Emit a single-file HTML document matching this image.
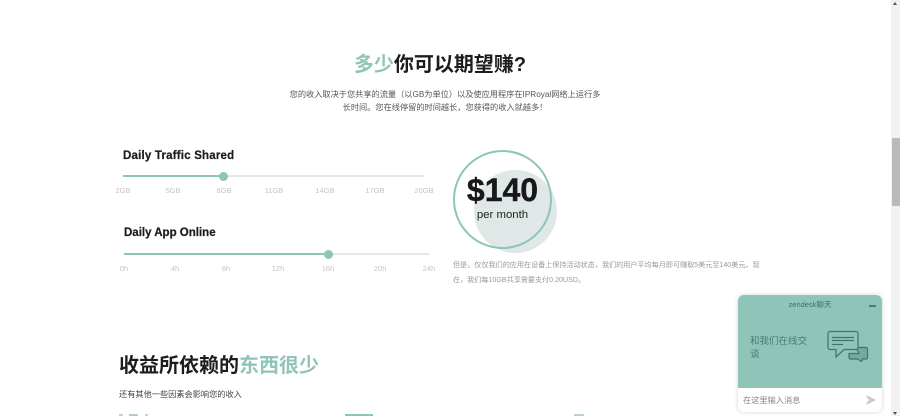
<!DOCTYPE html>
<html lang="zh">
<head>
<meta charset="utf-8">
<style>
html,body{margin:0;padding:0;width:900px;height:416px;overflow:hidden;background:#fff}
body{position:relative;font-family:"Liberation Sans","Noto Sans CJK SC",sans-serif;color:#1d1d1f}
.a{position:absolute;white-space:nowrap}
.g{color:#8fc4b9}
.c{text-align:center}
.lab{position:absolute;font-size:7.5px;line-height:10px;color:#c4c4c4;width:30px;text-align:center}
.track{position:absolute;height:2px;background:#dfe9e6}
.fill{position:absolute;height:2px;background:#8fc4b9}
.thumb{position:absolute;width:9px;height:9px;border-radius:50%;background:#8fc4b9}
.h{font-weight:700;-webkit-text-stroke:.25px #1d1d1f}
</style>
</head>
<body>
<div class="a c" style="left:0;width:880px;top:49px;font-size:20px;line-height:32px;font-weight:700"><span class="g">多少</span>你可以期望赚?</div>
<div class="a c" style="left:0;width:890px;top:88px;font-size:8.2px;line-height:13px;color:#555">您的收入取决于您共享的流量（以GB为单位）以及使应用程序在IPRoyal网络上运行多<br>长时间。您在线停留的时间越长，您获得的收入就越多！</div>

<div class="a h" style="left:123px;top:149px;font-size:11.5px;line-height:14px;letter-spacing:.2px">Daily Traffic Shared</div>
<div class="track" style="left:123px;top:175px;width:301px"></div>
<div class="fill" style="left:123px;top:175px;width:100px"></div>
<div class="thumb" style="left:219px;top:172px"></div>
<div class="lab" style="left:108px;top:186px">2GB</div>
<div class="lab" style="left:158px;top:186px">5GB</div>
<div class="lab" style="left:209px;top:186px">8GB</div>
<div class="lab" style="left:259px;top:186px">11GB</div>
<div class="lab" style="left:310px;top:186px">14GB</div>
<div class="lab" style="left:360px;top:186px">17GB</div>
<div class="lab" style="left:409px;top:186px">20GB</div>

<div class="a h" style="left:124px;top:226px;font-size:11.5px;line-height:14px">Daily App Online</div>
<div class="track" style="left:124px;top:253px;width:305px"></div>
<div class="fill" style="left:124px;top:253px;width:204px"></div>
<div class="thumb" style="left:324px;top:250px"></div>
<div class="lab" style="left:109px;top:264px">0h</div>
<div class="lab" style="left:160px;top:264px">4h</div>
<div class="lab" style="left:211px;top:264px">8h</div>
<div class="lab" style="left:263px;top:264px">12h</div>
<div class="lab" style="left:313px;top:264px">16h</div>
<div class="lab" style="left:365px;top:264px">20h</div>
<div class="lab" style="left:414px;top:264px">24h</div>

<div class="a" style="left:474px;top:170px;width:83px;height:83px;border-radius:50%;background:#dfe8e6"></div>
<div class="a" style="left:453px;top:150px;width:95px;height:95px;border:2px solid #8fc4b9;border-radius:50%"></div>
<div class="a c" style="left:453px;width:99px;top:172px;font-size:32px;line-height:36px;font-weight:700;color:#18181a;-webkit-text-stroke:.4px #18181a">$140</div>
<div class="a c" style="left:453px;width:99px;top:208px;font-size:11.4px;line-height:14px;color:#222">per month</div>
<div class="a" style="left:453px;top:258px;font-size:7.1px;line-height:15px;color:#999">但是，仅仅我们的应用在设备上保持活动状态，我们的用户平均每月即可赚取5美元至140美元。现<br>在，我们每10GB共享需要支付0.20USD。</div>

<div class="a" style="left:119px;top:351px;font-size:20px;line-height:30px;font-weight:700">收益所依赖的<span class="g">东西很少</span></div>
<div class="a" style="left:119px;top:388px;font-size:8.2px;line-height:13px;color:#444">还有其他一些因素会影响您的收入</div>

<div class="a" style="left:119px;top:414px;width:4px;height:2px;background:#ccc"></div>
<div class="a" style="left:129px;top:414px;width:9px;height:2px;background:#b5cdc8"></div>
<div class="a" style="left:145px;top:414px;width:3px;height:2px;background:#ccc"></div>
<div class="a" style="left:345px;top:414px;width:28px;height:2px;background:#8fc4b9"></div>
<div class="a" style="left:574px;top:414px;width:10px;height:2px;background:#b9d5cf"></div>

<div class="a" style="left:891px;top:0;width:9px;height:416px;background:#f1f1f1"></div>
<div class="a" style="left:892px;top:138px;width:8px;height:68px;background:#b9b9b9"></div>
<div class="a" style="left:893px;top:2px;width:0;height:0;border-left:2.5px solid transparent;border-right:2.5px solid transparent;border-bottom:3px solid #555"></div>
<div class="a" style="left:893px;top:412px;width:0;height:0;border-left:2.5px solid transparent;border-right:2.5px solid transparent;border-top:3px solid #555"></div>

<div class="a" style="left:738px;top:295px;width:144px;height:117px;border-radius:6px;background:#fff;box-shadow:0 0 4px rgba(0,0,0,.18);overflow:hidden">
  <div style="position:absolute;left:0;top:0;width:144px;height:93px;background:#8fc4b9"></div>
  <div class="a c" style="left:0;width:144px;top:4px;font-size:7.5px;line-height:12px;color:#3f6f66">zendesk聊天</div>
  <div class="a" style="left:131px;top:10px;width:7px;height:2px;background:#4a7d73"></div>
  <div class="a" style="left:12px;top:40px;font-size:9.5px;line-height:13px;color:#4a7d73">和我们在线交<br>谈</div>
  <svg style="position:absolute;left:88px;top:34px" width="44" height="36" viewBox="0 0 44 36" fill="none" stroke="#41756a" stroke-width="1.200">
    <path d="M30 18.500h10a1.500 1.500 0 0 1 1.500 1.500v8.500a1.500 1.500 0 0 1-1.500 1.500h-3.500l-1 2.500-4-2.500h-7a1.500 1.500 0 0 1-1.500-1.500v-4h10z" fill="#74ab9f"/>
    <path d="M4 2.500h26a2 2 0 0 1 2 2v14a2 2 0 0 1-2 2H18l-8 7.500v-7.500H4a2 2 0 0 1-2-2v-14a2 2 0 0 1 2-2z" fill="#8fc4b9"/>
    <path d="M6 8.500h22M6 11.500h22M6 15.500h11"/>
  </svg>
  <div class="a" style="left:5px;top:99px;font-size:8.2px;line-height:13px;color:#888">在这里输入消息</div>
  <svg style="position:absolute;left:127px;top:100px" width="11" height="10" viewBox="0 0 11 10"><path d="M1 0l10 5-10 5 1.500-3.500L5 5 2.500 3.500z" fill="#c8c8c8"/></svg>
</div>
</body>
</html>
